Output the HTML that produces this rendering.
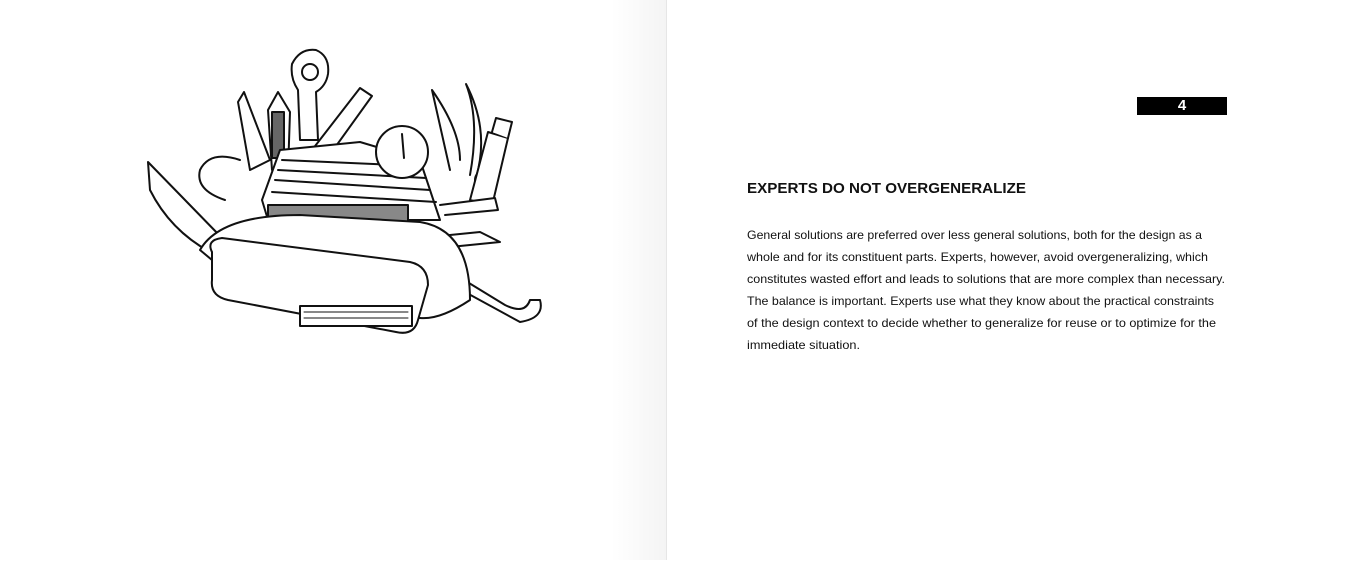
<!DOCTYPE html>
<html><head><meta charset="utf-8"><style>
html,body{margin:0;padding:0;background:#fff;}
body{width:1355px;height:569px;position:relative;overflow:hidden;font-family:"Liberation Sans",sans-serif;}
.shade{position:absolute;left:610px;top:0;width:56px;height:560px;background:linear-gradient(to right,rgba(0,0,0,0),rgba(0,0,0,0.045));}
.gut{position:absolute;left:666px;top:0;width:1px;height:560px;background:#e6e6e6;}
.num{position:absolute;left:1137px;top:97px;width:90px;height:18px;background:#000;color:#fff;font-weight:bold;font-size:15px;line-height:18px;text-align:center;}
svg{position:absolute;left:0;top:0;}
</style></head><body>
<div class="shade"></div><div class="gut"></div>
<div class="num">4</div>
<svg width="1355" height="569">
<g font-family="Liberation Sans, sans-serif" fill="#111">
<text x="747" y="193" font-size="15" font-weight="bold" textLength="279" lengthAdjust="spacingAndGlyphs">EXPERTS DO NOT OVERGENERALIZE</text>
<g font-size="12">
<text x="747" y="239" textLength="455" lengthAdjust="spacingAndGlyphs">General solutions are preferred over less general solutions, both for the design as a</text>
<text x="747" y="261" textLength="461" lengthAdjust="spacingAndGlyphs">whole and for its constituent parts. Experts, however, avoid overgeneralizing, which</text>
<text x="747" y="283" textLength="478" lengthAdjust="spacingAndGlyphs">constitutes wasted effort and leads to solutions that are more complex than necessary.</text>
<text x="747" y="305" textLength="467" lengthAdjust="spacingAndGlyphs">The balance is important. Experts use what they know about the practical constraints</text>
<text x="747" y="327" textLength="469" lengthAdjust="spacingAndGlyphs">of the design context to decide whether to generalize for reuse or to optimize for the</text>
<text x="747" y="349" textLength="113" lengthAdjust="spacingAndGlyphs">immediate situation.</text>
</g></g>
<g fill="#fff" stroke="#111" stroke-width="2" stroke-linejoin="round" stroke-linecap="round">
<!-- key -->
<path d="M300 140 L298 90 Q290 78 292 64 Q300 48 316 50 Q330 56 328 74 Q326 86 316 92 L318 140 Z"/>
<circle cx="310" cy="72" r="8"/>
<!-- ruler -->
<path d="M312 150 L360 88 L372 96 L326 160 Z"/>
<!-- saw -->
<path d="M250 170 L238 102 L244 92 L270 160 Z"/>
<!-- blade small -->
<path d="M272 170 L268 110 L278 92 L290 112 L288 172 Z"/>
<rect x="272" y="112" width="12" height="46" fill="#666"/>
<!-- scissors -->
<path d="M450 170 L432 90 Q460 130 460 160 M470 175 Q480 120 466 84 Q490 130 476 178"/>
<circle cx="485" cy="180" r="10"/>
<!-- usb -->
<path d="M470 200 L488 132 L508 138 L492 206 Z"/>
<path d="M492 132 L496 118 L512 122 L508 138"/>
<!-- left blade -->
<path d="M148 162 L222 238 L210 252 Q170 230 150 190 Z"/>
<!-- shackle -->
<path d="M225 200 Q195 190 200 170 Q210 150 240 160"/>
<!-- stack -->
<path d="M262 200 L280 150 L360 142 L420 160 L440 220 L268 220 Z"/>
<path d="M275 180 L430 190 M278 170 L426 178 M282 160 L420 166 M272 192 L436 202" fill="none"/>
<rect x="268" y="205" width="140" height="22" fill="#888"/>
<!-- compass -->
<circle cx="402" cy="152" r="26"/>
<path d="M402 134 L404 158" fill="none"/>
<!-- pliers -->
<path d="M415 250 L505 305 Q525 315 530 300 L540 300 Q545 318 520 322 L410 262 Z"/>
<path d="M420 238 L480 232 L500 242 L440 248"/>
<path d="M440 205 L495 198 L498 210 L445 215"/>
<!-- back plate -->
<path d="M200 250 Q220 215 300 215 L420 222 Q470 230 470 300 Q440 320 420 318 L260 300 Z"/>
<!-- front body -->
<path d="M212 252 Q206 240 222 238 L410 262 Q428 266 428 285 L418 320 Q414 336 396 332 L228 300 Q210 296 212 280 Z"/>
<rect x="300" y="306" width="112" height="20" fill="#fff"/>
<path d="M304 312 h104 M304 318 h104" fill="none" stroke-width="1"/>
</g>
</svg>
</body></html>
